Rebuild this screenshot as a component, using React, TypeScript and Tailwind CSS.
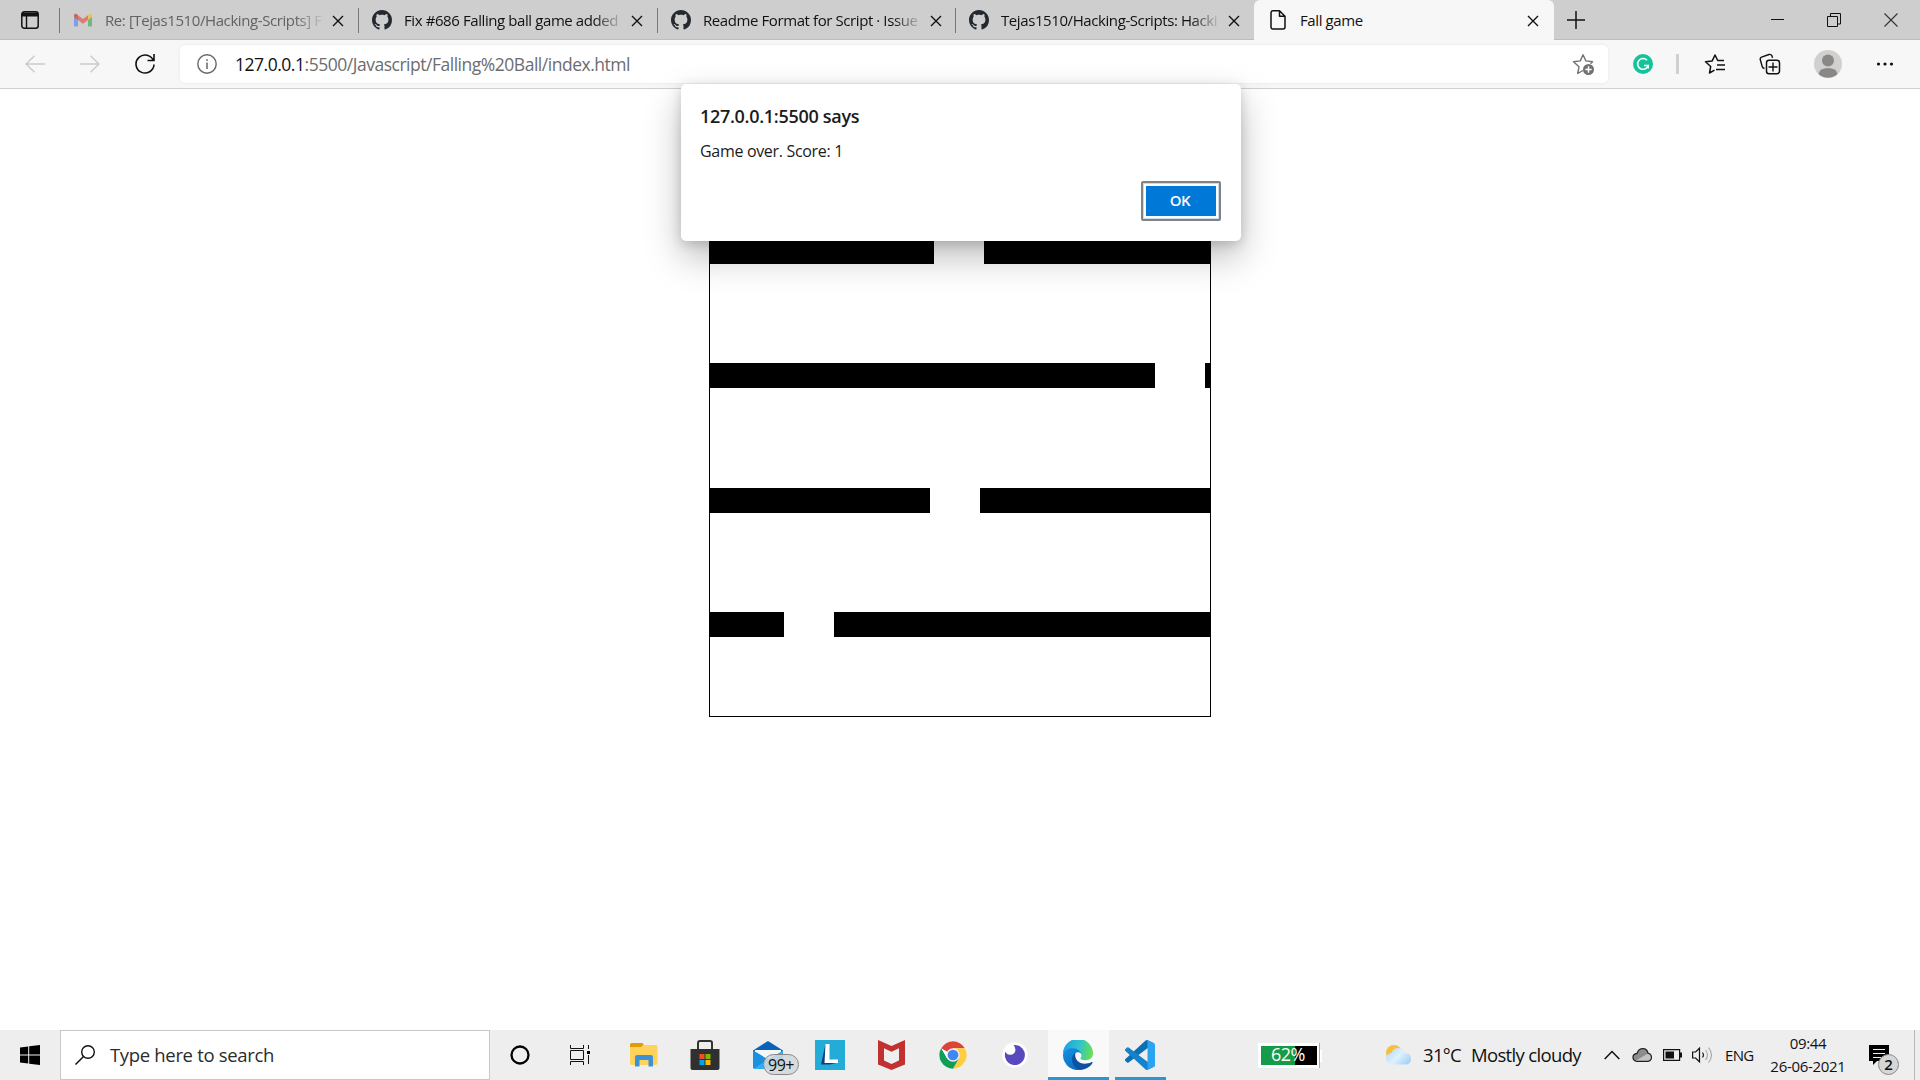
import type { ReactNode } from "react";

const FONT = "font-['Open_Sans','Noto_Sans',sans-serif]";

function Svg({ w, h, className = "", children }: { w: number; h: number; className?: string; children: ReactNode }) {
  return (
    <svg width={w} height={h} viewBox={`0 0 ${w} ${h}`} fill="none" className={`block shrink-0 ${className}`}>
      {children}
    </svg>
  );
}

const Cross = ({ className = "" }: { className?: string }) => (
  <Svg w={12} h={12} className={className}>
    <path d="M1 1l10 10M11 1L1 11" stroke="#111" strokeWidth="1.4" />
  </Svg>
);

const GitHub = () => (
  <svg width="20" height="20" viewBox="0 0 16 16" fill="#24292f" className="block">
    <path d="M8 0C3.58 0 0 3.58 0 8c0 3.54 2.29 6.53 5.47 7.59.4.07.55-.17.55-.38 0-.19-.01-.82-.01-1.49-2.01.37-2.53-.49-2.69-.94-.09-.23-.48-.94-.82-1.13-.28-.15-.68-.52-.01-.53.63-.01 1.08.58 1.23.82.72 1.21 1.87.87 2.33.66.07-.52.28-.87.51-1.07-1.78-.2-3.64-.89-3.64-3.95 0-.87.31-1.59.82-2.15-.08-.2-.36-1.02.08-2.12 0 0 .67-.21 2.2.82.64-.18 1.32-.27 2-.27s1.36.09 2 .27c1.53-1.04 2.2-.82 2.2-.82.44 1.1.16 1.92.08 2.12.51.56.82 1.27.82 2.15 0 3.07-1.87 3.75-3.65 3.95.29.25.54.73.54 1.48 0 1.07-.01 1.93-.01 2.2 0 .21.15.46.55.38A8.01 8.01 0 0 0 16 8c0-4.42-3.58-8-8-8z" />
  </svg>
);

const Gmail = () => (
  <Svg w={20} h={16} className="opacity-60">
    <path d="M1 3v10.500q0 1 1 1h3V7z" fill="#4285f4" />
    <path d="M19 3v10.500q0 1-1 1h-3V7z" fill="#34a853" />
    <path d="M1 3.200V5l4 3V3.200L3.600 2Q1.200 1 1 3.200z" fill="#c5221f" />
    <path d="M19 3.200V5l-4 3V3.200L16.400 2Q18.800 1 19 3.200z" fill="#fbbc04" />
    <path d="M5 3.200l5 3.800 5-3.800V8l-5 3.800L5 8z" fill="#ea4335" />
  </Svg>
);

const PageIcon = () => (
  <Svg w={18} h={22}>
    <path d="M4 1.800h6.500L16 7.300V18q0 2-2 2H4q-2 0-2-2V3.800q0-2 2-2zM10.500 2v5.300H16" stroke="#111" strokeWidth="1.500" strokeLinejoin="round" />
  </Svg>
);

function Tab({ title, icon, dim, width }: { title: string; icon: ReactNode; dim?: boolean; width: string }) {
  return (
    <div className={`flex h-10 shrink-0 items-center ${width}`}>
      <div className="h-[25px] w-px shrink-0 bg-[#777]" />
      <div className="ml-[11px] flex w-[23px] shrink-0 justify-center">{icon}</div>
      <div
        className={`ml-[11px] w-[220px] shrink-0 text-[15px] leading-5 tracking-[-0.41px] whitespace-nowrap [mask-image:linear-gradient(to_right,#000_190px,transparent_220px)] ${dim ? "text-[#626262]" : "text-[#111]"}`}
      >
        {title}
      </div>
      <Cross className="mt-[2px] ml-[7px]" />
    </div>
  );
}

function TabStrip() {
  return (
    <div className="flex h-10 items-center bg-[#cecece] shadow-[inset_0_-1px_0_#bdbdbd]">
      <div className="flex w-[59px] shrink-0 justify-center">
        <Svg w={20} h={20}>
          <rect x="1.800" y="1.800" width="16.400" height="16.400" rx="2.500" stroke="#111" strokeWidth="1.500" />
          <path d="M2 2.500h16v4H2z" fill="#111" />
          <path d="M6.500 6v12" stroke="#111" strokeWidth="1.400" />
        </Svg>
      </div>
      <Tab title="Re: [Tejas1510/Hacking-Scripts] F" icon={<Gmail />} dim width="w-[299px]" />
      <Tab title="Fix #686 Falling ball game added" icon={<GitHub />} width="w-[299px]" />
      <Tab title="Readme Format for Script · Issue" icon={<GitHub />} width="w-[298px]" />
      <Tab title="Tejas1510/Hacking-Scripts: Hacki" icon={<GitHub />} width="w-[299px]" />
      <div className="flex h-10 w-[300px] shrink-0 items-center rounded-t-[6px] bg-[#f7f7f7]">
        <div className="ml-[15px]">
          <PageIcon />
        </div>
        <div className="ml-[13px] w-[218px] text-[15px] leading-5 tracking-[-0.41px] whitespace-nowrap text-[#111]">Fall game</div>
        <Cross className="mt-[2px] ml-[9px]" />
      </div>
      <Svg w={18} h={18} className="ml-[13px]">
        <path d="M9 0v18M0 9h18" stroke="#111" strokeWidth="1.500" />
      </Svg>
      <Svg w={14} h={14} className="ml-[186px]">
        <path d="M0 6.500h13" stroke="#111" />
      </Svg>
      <Svg w={14} h={14} className="ml-[42px]">
        <path d="M.5 3.500h10v10H.5zM3.500 3V.5h10v10.500h-3" stroke="#111" />
      </Svg>
      <Svg w={14} h={14} className="ml-[43px]">
        <path d="M.5.5l13 13M13.500.5l-13 13" stroke="#333" strokeWidth="1.100" />
      </Svg>
    </div>
  );
}

function Toolbar() {
  return (
    <div className="flex h-[49px] items-center border-b border-[#cfcfcf] bg-[#f7f7f7]">
      <Svg w={20} h={18} className="ml-[25px]">
        <path d="M20 9H1M9.500.8L1 9l8.500 8.200" stroke="#cbcbcb" strokeWidth="1.500" />
      </Svg>
      <Svg w={20} h={18} className="ml-[35px]">
        <path d="M0 9h19M10.500.8L19 9l-8.500 8.200" stroke="#cbcbcb" strokeWidth="1.500" />
      </Svg>
      <Svg w={20} h={22} className="ml-[35px]">
        <path d="M18.500 8A9 9 0 1 0 19 11.500M19 1v6.500h-6.500" stroke="#111" strokeWidth="1.600" />
      </Svg>
      <div className="ml-[25px] flex h-[38px] w-[1428px] items-center rounded-[5px] bg-white shadow-[0_0_3px_#e6e6e6]">
        <Svg w={20} h={20} className="ml-[17px]">
          <circle cx="10" cy="10" r="9.200" stroke="#666" strokeWidth="1.400" />
          <path d="M10 8.500V15M10 5.200v1.700" stroke="#666" strokeWidth="1.500" />
        </Svg>
        <div className="ml-[18px] text-[17.5px] leading-6 tracking-[-0.48px] whitespace-nowrap text-[#6d6d6d]">
          <span className="text-[#111]">127.0.0.1</span>:5500/Javascript/Falling%20Ball/index.html
        </div>
        <Svg w={24} h={24} className="mr-[13px] ml-auto">
          <path d="M12 18.500l-5.300 3 1.300-6.700L2.500 9.800l6.800-.9L12 2.800l2.900 6.100 6.600.9-2 2" stroke="#717171" strokeWidth="1.400" strokeLinejoin="round" />
          <circle cx="17.500" cy="17.500" r="5.500" fill="#717171" />
          <path d="M17.500 14.300v6.400M14.300 17.500h6.400" stroke="#fff" strokeWidth="1.500" />
        </Svg>
      </div>
      <Svg w={20} h={20} className="ml-[25px]">
        <circle cx="10" cy="10" r="10" fill="#15c39a" />
        <path d="M14 6.200A5.400 5.400 0 1 0 15.200 11.500H11M15.200 10.800v3.700" stroke="#fff" strokeWidth="1.600" />
      </Svg>
      <div className="ml-[23px] h-5 w-[3px] bg-[#d0d0d0]" />
      <Svg w={22} h={22} className="ml-[25px]">
        <path d="M10.500 17.200L5.500 20l1.200-6.500L1.500 8.800l6.700-.9L11 2l2.700 5.500H20M13 12h8M12 16.500h9" stroke="#111" strokeWidth="1.500" strokeLinejoin="round" />
      </Svg>
      <Svg w={22} h={22} className="ml-[33px]">
        <path d="M5.500 15.500q-1.800-.3-2.300-2L1.300 6.800Q.8 4.800 2.500 4.200L10 1.500q2-.5 3 1.300l.5 2" stroke="#111" strokeWidth="1.400" />
        <rect x="7.500" y="7.200" width="13" height="13.500" rx="2.500" stroke="#111" strokeWidth="1.500" />
        <path d="M14 9.500v9M9.500 14h9" stroke="#111" strokeWidth="1.400" />
      </Svg>
      <Svg w={28} h={28} className="ml-[33px]">
        <circle cx="14" cy="14" r="14" fill="#d2d0ce" />
        <circle cx="14" cy="10.500" r="6" fill="#8a8886" />
        <path d="M4.500 24q1-6 9.500-6t9.500 6a14 14 0 0 1-19 0z" fill="#8a8886" />
      </Svg>
      <Svg w={18} h={4} className="ml-[34px]">
        <circle cx="2.500" cy="2" r="1.600" fill="#111" />
        <circle cx="9" cy="2" r="1.600" fill="#111" />
        <circle cx="15.500" cy="2" r="1.600" fill="#111" />
      </Svg>
    </div>
  );
}

function Platform({ left, right, gap }: { left: string; right: string; gap: string }) {
  return (
    <div className={`flex h-[25px] justify-between ${gap}`}>
      <div className={`bg-black ${left}`} />
      <div className={`bg-black ${right}`} />
    </div>
  );
}

function Game() {
  return (
    <div className="mx-auto mt-[126px] h-[502px] w-[502px] border border-black">
      <Platform left="w-[224px]" right="w-[226px]" gap="mt-[23px]" />
      <Platform left="w-[445px]" right="w-[5px]" gap="mt-[99px]" />
      <Platform left="w-[220px]" right="w-[230px]" gap="mt-[100px]" />
      <Platform left="w-[74px]" right="w-[376px]" gap="mt-[99px]" />
    </div>
  );
}

function Alert() {
  return (
    <div className="absolute top-[84px] left-[681px] flex h-[157px] w-[560px] flex-col rounded-[5px] bg-white pt-[19px] pr-5 pl-[19px] shadow-[0_16px_36px_rgba(0,0,0,0.26),0_3px_12px_rgba(0,0,0,0.16)]">
      <div className="text-[18px] leading-[26px] font-semibold tracking-[-0.3px] text-[#1b1b1b]">127.0.0.1:5500 says</div>
      <div className="mt-[11px] text-[16px] leading-[22px] tracking-[-0.32px] text-[#1b1b1b]">Game over. Score: 1</div>
      <button className="mt-[19px] h-10 w-20 self-end rounded-[2px] border-2 border-[#828282] bg-[#c7dcf0] p-px">
        <span className="flex h-full items-center justify-center border-2 border-white bg-[#0078d7] pr-[2px] pb-[2px] text-[15px] leading-none font-semibold tracking-[-0.4px] text-white">OK</span>
      </button>
    </div>
  );
}

function Taskbar() {
  return (
    <div className="flex h-[50px] items-center bg-[#eeeeee] text-[#111]">
      <Svg w={20} h={20} className="ml-5">
        <path d="M0 2.500L8.200 1.400V9.400H0zM9.200 1.200L20 0v9.400H9.200zM0 10.500h8.200v8L0 17.500zM9.200 10.500H20V20L9.200 18.700z" fill="#000" />
      </Svg>
      <div className="ml-5 flex h-[50px] w-[430px] shrink-0 items-center border border-[#c8c8c8] bg-white">
        <Svg w={20} h={20} className="ml-[14px]">
          <circle cx="13" cy="7" r="6.300" stroke="#111" strokeWidth="1.400" />
          <path d="M8.500 11.500L.5 19.500" stroke="#111" strokeWidth="1.500" />
        </Svg>
        <div className="ml-[15px] text-[18.5px] leading-6 tracking-[-0.33px] whitespace-nowrap text-[#2b2b2b]">Type here to search</div>
      </div>
      <Svg w={20} h={20} className="ml-5">
        <circle cx="10" cy="10" r="8.500" stroke="#000" strokeWidth="2.300" />
      </Svg>
      <Svg w={22} h={20} className="ml-10">
        <path d="M.5 0v3.500h13V0M.5 20v-3.500h13V20M.5 5.500h13v9H.5zM18.500 0v4M18.500 10v9" stroke="#111" />
        <path d="M17 6h3v3h-3z" fill="#000" />
      </Svg>
      <Svg w={28} h={24} className="ml-[38px]">
        <path d="M0 1.500Q0 0 1.500 0H12q1.500 0 1.500 1.500V5H0z" fill="#e09b06" />
        <path d="M0 4h11l2-2h13q1.500 0 1.500 1.500V20q0 2-2 2h-24Q0 22 0 20z" fill="#ffd35a" />
        <path d="M5 23.500V14q0-2 2-2h14q2 0 2 2v9.500h-4.500V17h-9v6.500z" fill="#3c91d7" />
      </Svg>
      <Svg w={30} h={30} className="ml-[32px]">
        <path d="M8 11V3q0-2 2-2h10q2 0 2 2v8" stroke="#333" strokeWidth="2" />
        <path d="M.5 9h29v19q0 2-2 2h-25q-2 0-2-2z" fill="#303030" />
        <path d="M9.500 14h5v5h-5z" fill="#f25022" />
        <path d="M15.500 14h5v5h-5z" fill="#7fba00" />
        <path d="M9.500 20h5v5h-5z" fill="#00a4ef" />
        <path d="M15.500 20h5v5h-5z" fill="#ffb900" />
      </Svg>
      <div className="relative ml-[33px] shrink-0">
        <Svg w={30} h={28}>
          <path d="M0 9.500L15 0l15 9.500V16H0z" fill="#0a62b8" />
          <path d="M2 9h26v8H2z" fill="#f5f5f5" />
          <path d="M0 9.500l15 9 15-9V26q0 2-2 2H2q-2 0-2-2z" fill="#2fb0ee" />
          <path d="M15 18.500L1 27.500Q0 27 0 26V9.500z" fill="#1a90e0" />
        </Svg>
        <div className="absolute top-[13px] left-[10px] flex h-[21px] w-[36px] items-center justify-center rounded-full border border-[#888] bg-[#d4d8dadd] text-[16px] leading-none tracking-[-0.5px] text-[#111]">
          99+
        </div>
      </div>
      <Svg w={30} h={30} className="ml-[32px]">
        <path d="M0 0h30v30H0z" fill="#24acd8" />
        <path d="M10.500 4L6 24.500h9l8-2-10-2z" fill="#123f7c" />
        <path d="M10.500 4h4v15.500H23V23H9.500z" fill="#fff" />
      </Svg>
      <Svg w={28} h={30} className="ml-[33px]">
        <path d="M0 0l13.500 6L27 0v24.500L13.500 30 0 24.500z" fill="#c2302f" />
        <path d="M6 8.300l7.500 3.500L21 8.300v12.200L13.500 24 6 20.500z" fill="#eee" />
      </Svg>
      <svg width="28" height="28" viewBox="0 0 48 48" className="ml-[33px] block shrink-0">
        <circle cx="24" cy="24" r="23.500" fill="#fff" />
        <path d="M24 24L3.700 12.300A23.500 23.500 0 0 1 44.400 12.300H24z" fill="#db4437" />
        <path d="M24 12.300h20.400A23.500 23.500 0 0 1 24 47.500l10.100-17.600z" fill="#ffcd40" />
        <path d="M3.700 12.300A23.500 23.500 0 0 0 24 47.500l10.100-17.600L13.800 29.900z" fill="#0f9d58" />
        <circle cx="24" cy="24" r="11.500" fill="#f1f1f1" />
        <circle cx="24" cy="24" r="9.200" fill="#4285f4" />
      </svg>
      <Svg w={26} h={26} className="ml-[35px]">
        <circle cx="13" cy="13" r="12.700" fill="#fff" />
        <path d="M13 3A10 10 0 1 1 3.500 9.500q1 3.300 4.500 3.300 5 0 5.500-4.800Q13.500 5 11.500 3.200z" fill="#5849be" />
      </Svg>
      <div className="ml-[20px] flex h-[50px] w-[61px] shrink-0 border-b-[3px] border-[#2b97d0] bg-[#f9f9f9] pt-[10px] pl-[15px]">
        <Svg w={30} h={30}>
          <defs>
            <linearGradient id="edgeTop" x1="0" y1="8" x2="29" y2="14" gradientUnits="userSpaceOnUse">
              <stop offset="0" stopColor="#259fe0" />
              <stop offset=".5" stopColor="#2fc2d0" />
              <stop offset="1" stopColor="#66e052" />
            </linearGradient>
            <linearGradient id="edgeLeft" x1="2" y1="10" x2="14" y2="28" gradientUnits="userSpaceOnUse">
              <stop offset="0" stopColor="#1490df" />
              <stop offset="1" stopColor="#0c6cc4" />
            </linearGradient>
          </defs>
          <path d="M0 14A15 15 0 0 1 30 13.500C30 18 26.500 20.200 22.500 20.200C18 20.200 17 18.800 17.600 17.800C19.500 16 18.500 9 10.500 9C5 9 1 11.500 0 14z" fill="url(#edgeTop)" />
          <path d="M0 14.500C1 10 5 8.300 10 8.300C15 8.300 18.600 12 18.600 14.500C17.500 12 14 11.500 12.300 13.500C9 18 11 27 20 29.200A15 15 0 0 1 0 14.500z" fill="url(#edgeLeft)" />
          <path d="M12.300 13.300C7 16 8 28 17.500 29.800C23 29.600 27 27 29.500 23C29.800 22.200 29 21.900 28.300 22.300C19 26.500 11 21 12.300 13.300z" fill="#0d51a2" />
        </Svg>
      </div>
      <div className="ml-[6px] flex h-[50px] w-[51px] shrink-0 border-b-[3px] border-[#2b97d0] pt-[10px] pl-[10px]">
        <svg width="30" height="30" viewBox="0 0 100 100" className="block shrink-0">
          <path d="M96.460 10.800L75.860.876a6.230 6.230 0 0 0-7.107 1.207l-67.450 61.500a4.167 4.167 0 0 0 .004 6.162l5.510 5.009a4.167 4.167 0 0 0 5.320.236l81.228-61.620c2.725-2.067 6.639-.124 6.639 3.297v-.240a6.250 6.250 0 0 0-3.539-5.630z" fill="#0a70b5" />
          <path d="M96.460 89.200l-20.600 9.924a6.229 6.229 0 0 1-7.107-1.207l-67.450-61.500a4.167 4.167 0 0 1 .004-6.162l5.510-5.009a4.167 4.167 0 0 1 5.320-.236l81.228 61.620c2.725 2.067 6.639.124 6.639-3.297v.240a6.250 6.250 0 0 1-3.539 5.630z" fill="#1583c9" />
          <path d="M75.858 99.126a6.232 6.232 0 0 1-7.108-1.210c2.306 2.307 6.250.674 6.250-2.588V4.672c0-3.262-3.944-4.895-6.250-2.589a6.232 6.232 0 0 1 7.108-1.210l20.600 9.908A6.250 6.250 0 0 1 100 16.413v67.174a6.250 6.250 0 0 1-3.541 5.633l-20.601 9.906z" fill="#2aa3f1" />
        </svg>
      </div>
      <div className="ml-[92px] flex shrink-0 items-center">
        <div className="flex h-[25px] w-[61px] items-center border-[3px] border-r-2 border-white bg-[linear-gradient(to_right,#169b49_34px,#000_34px)] pb-[2px] pl-[10px] text-[18px] leading-none tracking-[-0.5px] text-white">62%</div>
        <div className="flex h-[25px] w-[3px] flex-col border-l border-[#aaa]">
          <div className="mt-[7px] h-[12px] bg-white" />
        </div>
      </div>
      <Svg w={28} h={22} className="ml-[63px]">
        <defs>
          <linearGradient id="cloud" x1="5" y1="4" x2="22" y2="20" gradientUnits="userSpaceOnUse">
            <stop offset="0" stopColor="#b3dcf9" />
            <stop offset=".5" stopColor="#dff1fd" />
            <stop offset="1" stopColor="#a6d2f5" />
          </linearGradient>
        </defs>
        <circle cx="9" cy="9" r="8" fill="#f8bf3f" />
        <path d="M7 20.500a5.800 5.800 0 0 1-.5-11.600Q8 4 13.500 4 19 4 20 9q6 0 6 6 0 5.500-6 5.500z" fill="url(#cloud)" />
      </Svg>
      <div className="ml-[10px] w-[48px] text-[18.5px] leading-6 tracking-[-0.7px] whitespace-nowrap">31°C</div>
      <div className="w-[133px] text-[18.5px] leading-6 tracking-[-0.66px] whitespace-nowrap">Mostly cloudy</div>
      <Svg w={16} h={10}>
        <path d="M.7 9L8 1.500 15.300 9" stroke="#111" strokeWidth="1.500" />
      </Svg>
      <Svg w={20} h={16} className="ml-3">
        <path d="M4.500 14.300Q1 13.500 1 10.500 1 7 5 6.500 6.500 1.700 11 1.700q4 0 5 4.500 3.500.8 3.500 4.300 0 3-3.500 3.800z" fill="#c3c3c3" />
        <path d="M1.500 12.500q-.5-5.500 4-6 1.500-4.500 5.500-4.500 4 0 5 4.500L4 13.500z" fill="#8c8c8c" />
        <path d="M4.500 14.300Q1 13.500 1 10.500 1 7 5 6.500 6.500 1.700 11 1.700q4 0 5 4.500 3.500.8 3.500 4.300 0 3-3.500 3.800z" stroke="#222" strokeWidth="1.300" />
      </Svg>
      <Svg w={19} h={12} className="ml-[11px]">
        <path d="M.6.6h16v10.800H.6z" stroke="#111" strokeWidth="1.200" />
        <path d="M2.500 2.500H11v7H2.500zM17 3.500h2v5h-2z" fill="#111" />
      </Svg>
      <Svg w={22} h={18} className="ml-[10px]">
        <path d="M.6 6h3L7.500 2.200v13.600L3.600 12h-3z" stroke="#111" strokeWidth="1.200" />
        <path d="M10.500 6.500q2 2.500 0 5" stroke="#222" strokeWidth="1.200" />
        <path d="M13.500 4q4 5 0 10M16.500 1.500q6 7.500 0 15" stroke="#aaa" strokeWidth="1.200" />
      </Svg>
      <div className="ml-[11px] w-[43px] text-[15px] leading-5 tracking-[-0.7px]">ENG</div>
      <div className="w-[80px] text-center text-[15px] leading-[23px] tracking-[-0.3px] whitespace-nowrap">
        <div>09:44</div>
        <div>26-06-2021</div>
      </div>
      <div className="relative ml-[21px] h-5 w-5 shrink-0">
        <Svg w={20} h={20}>
          <path d="M0 0h20v16H8l-4 4v-4H0z" fill="#000" />
          <path d="M4 4.500h12M4 8.500h12M4 12.500h8" stroke="#eee" />
        </Svg>
        <div className="absolute top-[9px] left-[9px] flex h-[21px] w-[21px] items-center justify-center rounded-full border border-[#888] bg-[#d6d6d6] text-[15px] leading-none font-semibold">2</div>
      </div>
      <div className="ml-auto h-[50px] w-[6px] shrink-0 border-l border-[#b9b9b9]" />
    </div>
  );
}

export default function App() {
  return (
    <div className={`relative flex h-[1080px] w-[1920px] flex-col overflow-hidden bg-white ${FONT}`}>
      <TabStrip />
      <Toolbar />
      <div className="min-h-0 flex-1">
        <Game />
      </div>
      <Taskbar />
      <Alert />
    </div>
  );
}
